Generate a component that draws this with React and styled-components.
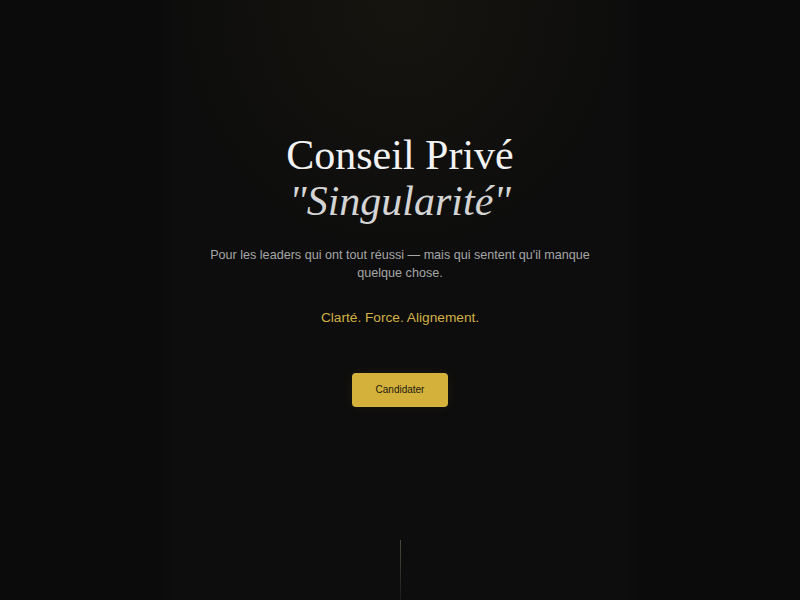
import styled, { createGlobalStyle } from "styled-components"

const GlobalStyle = createGlobalStyle`
  * {
    box-sizing: border-box;
  }
  html, body {
    margin: 0;
    padding: 0;
    background: #0b0b0b;
  }
`

const Hero = styled.section`
  position: relative;
  min-height: 100vh;
  display: flex;
  flex-direction: column;
  align-items: center;
  padding-top: 132px;
  text-align: center;
  overflow: hidden;
  background:
    radial-gradient(ellipse 30% 45% at 50% 0%, rgba(212, 175, 55, 0.045), transparent 100%),
    linear-gradient(to right, transparent 20%, rgba(255, 255, 255, 0.008) 22%, rgba(255, 255, 255, 0.008) 78%, transparent 80%),
    #0b0b0b;
`

const Title = styled.h1`
  margin: 0;
  font-family: "Liberation Serif", "Times New Roman", serif;
  font-weight: 400;
  font-size: 42px;
  line-height: 1.1;
  color: #f2f2f2;
`

const Accent = styled.span`
  display: block;
  font-style: italic;
  color: #d4d4d4;
`

const Lead = styled.p`
  margin: 23px 0 0;
  max-width: 400px;
  font-family: "Liberation Sans", Arial, sans-serif;
  font-size: 12.6px;
  line-height: 17.6px;
  color: #a6a6a6;
`

const Motto = styled.p`
  margin: 25px 0 0;
  font-family: "Liberation Sans", Arial, sans-serif;
  font-size: 13.7px;
  line-height: 19.6px;
  color: #d2b045;
`

const Button = styled.button`
  margin-top: 46px;
  padding: 10px 24px;
  border: none;
  border-radius: 4px;
  background-color: #d4b13a;
  color: #1c1a12;
  font-family: "Liberation Sans", Arial, sans-serif;
  font-size: 10px;
  line-height: 14px;
  cursor: pointer;
  box-shadow: 0 0 12px rgba(212, 175, 55, 0.08);
`

// little scroll hint at the bottom of the hero
const ScrollLine = styled.div`
  position: absolute;
  left: 50%;
  bottom: 0;
  width: 1px;
  height: 60px;
  background: linear-gradient(to bottom, rgba(200, 190, 160, 0.35), rgba(200, 190, 160, 0.08));
`

const App = () => {
  return (
    <>
      <GlobalStyle />
      <Hero>
        <Title>
          Conseil Privé
          <Accent>"Singularité"</Accent>
        </Title>
        <Lead>Pour les leaders qui ont tout réussi — mais qui sentent qu'il manque quelque chose.</Lead>
        <Motto>Clarté. Force. Alignement.</Motto>
        <Button>Candidater</Button>
        <ScrollLine />
      </Hero>
    </>
  )
}

export default App
